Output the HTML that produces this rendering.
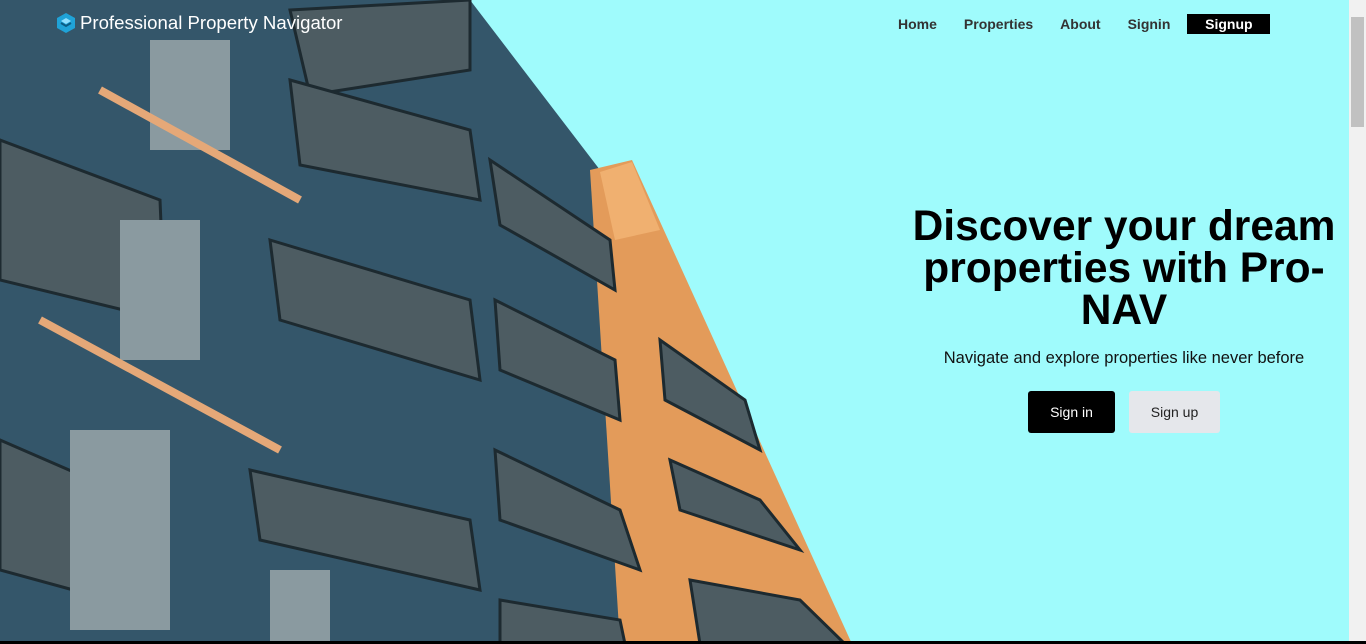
<!DOCTYPE html>
<html><head><style>
*{margin:0;padding:0;box-sizing:border-box}
body{width:1366px;height:644px;overflow:hidden;background:#9ffbfc;font-family:"Liberation Sans",sans-serif;position:relative}
svg.bg{position:absolute;left:0;top:0}
.logo{position:absolute;left:56px;top:12px;color:#fff;font-size:18.6px;display:flex;align-items:center;gap:4px}
.nav{position:absolute;top:14px;left:898px;display:flex;font-size:14px;font-weight:bold;color:#333}
.nav span{margin-right:27px;line-height:20px}
.nav .su{background:#000;color:#fff;width:83px;text-align:center;margin-left:-10px}
h1{position:absolute;left:890px;width:468px;top:206px;text-align:center;font-size:42.5px;line-height:42px;font-weight:bold;color:#000}
p{position:absolute;left:900px;width:448px;top:349px;text-align:center;font-size:16.5px;color:#111}
.b{position:absolute;top:391px;height:42px;border-radius:3px;font-size:14px;display:flex;align-items:center;justify-content:center}
.b1{left:1028px;width:87px;background:#000;color:#fff}
.b2{left:1129px;width:91px;background:#e5e7eb;color:#222}
.sb{position:absolute;right:0;top:0;width:17px;height:644px;background:#f1f1f1}
.th{position:absolute;right:2px;top:17px;width:13px;height:110px;background:#c1c1c1}
.bot{position:absolute;left:0;bottom:0;width:1366px;height:3px;background:#000}
</style></head><body>
<svg class="bg" width="860" height="644" viewBox="0 0 860 644">
<polygon points="0,0 470,0 600,170 625,644 0,644" fill="#34566a"/>
<polygon points="590,170 632,160 852,644 620,644" fill="#e39b5a"/>
<polygon points="600,172 632,162 660,230 615,240" fill="#f0b070"/>
<g fill="#4d5c62" stroke="#1d2a30" stroke-width="3">
<polygon points="290,10 470,0 470,70 310,95"/>
<polygon points="290,80 470,130 480,200 300,165"/>
<polygon points="270,240 470,300 480,380 280,320"/>
<polygon points="250,470 470,520 480,590 260,540"/>
<polygon points="0,140 160,200 165,320 0,280"/>
<polygon points="0,440 115,490 110,600 0,570"/>
<polygon points="490,160 610,240 615,290 500,225"/>
<polygon points="495,300 615,360 620,420 500,370"/>
<polygon points="495,450 620,510 640,570 500,520"/>
<polygon points="660,340 745,400 760,450 665,400"/>
<polygon points="670,460 760,500 800,550 680,510"/>
<polygon points="690,580 800,600 845,644 700,644"/>
<polygon points="500,600 620,620 625,644 500,644"/>
</g>
<g fill="#8a9aa0">
<rect x="150" y="40" width="80" height="110"/>
<rect x="120" y="220" width="80" height="140"/>
<rect x="70" y="430" width="100" height="200"/>
<rect x="270" y="570" width="60" height="74"/>
</g>
<g stroke="#e5a878" stroke-width="8">
<line x1="100" y1="90" x2="300" y2="200"/>
<line x1="40" y1="320" x2="280" y2="450"/>
</g>
</svg>
<div class="logo"><svg width="20" height="22" viewBox="0 0 20 22"><polygon points="10,1 19,6 19,16 10,21 1,16 1,6" fill="#1fa3d8"/><polygon points="10,6 15,9 10,12 5,9" fill="#8fe0ff"/><polyline points="5,11 10,14 15,11" stroke="#0b5d85" stroke-width="2" fill="none"/></svg>Professional Property Navigator</div>
<div class="nav"><span>Home</span><span>Properties</span><span>About</span><span>Signin</span><span class="su">Signup</span></div>
<h1>Discover your dream properties with Pro-NAV</h1>
<p>Navigate and explore properties like never before</p>
<div class="b b1">Sign in</div><div class="b b2">Sign up</div>
<div class="sb"><div class="th"></div></div>
<div class="bot"></div>
</body></html>
